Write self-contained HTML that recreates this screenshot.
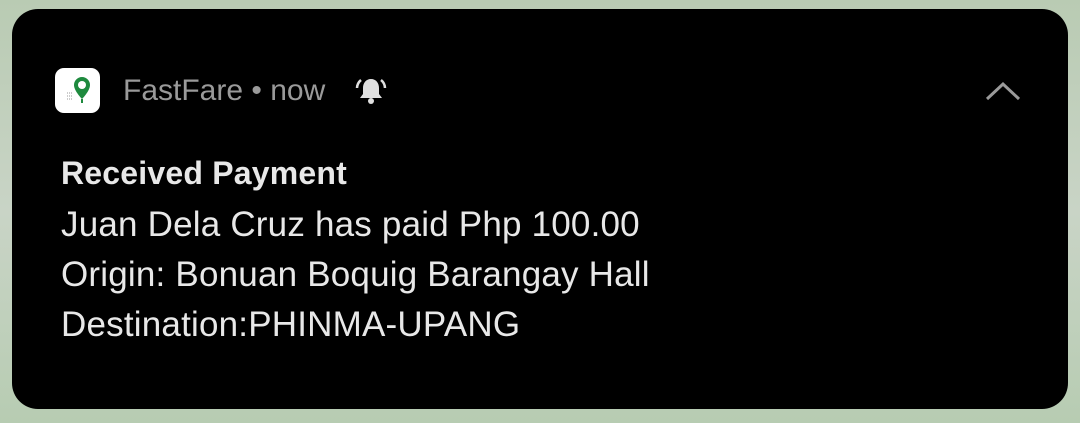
<!DOCTYPE html>
<html><head><style>
html,body{margin:0;padding:0;width:1080px;height:423px;overflow:hidden;background:linear-gradient(180deg,#b9cbb3 0%,#c9d4c6 50%,#b7ccb2 100%);font-family:"Liberation Sans",sans-serif;}
.card{position:absolute;left:12px;top:9px;width:1056px;height:400px;background:#000;border-radius:26px;}
.icon{position:absolute;left:55px;top:68px;width:45px;height:45px;background:#fff;border-radius:9px;}
.hdr{position:absolute;left:123px;top:74px;font-size:30px;color:#9a9a9a;white-space:nowrap;}
.t{position:absolute;left:61px;color:#e8e8e8;font-size:35px;white-space:nowrap;letter-spacing:0.2px;}
</style></head><body>
<div class="card"></div>
<div class="icon"><svg width="45" height="45" viewBox="0 0 45 45">
<path d="M27 9a8 8 0 0 0-8 8c0 6 8 14 8 14s8-8 8-14a8 8 0 0 0-8-8z" fill="#1e8a3e"/>
<circle cx="27" cy="17" r="4" fill="#fff"/><line x1="27" y1="31" x2="27" y2="35" stroke="#1e8a3e" stroke-width="2"/>
<path d="M12 25h6M12 28h6M12 31h5" stroke="#999" stroke-width="1" stroke-dasharray="1 1"/></svg></div>
<div class="hdr">FastFare • now</div>
<svg style="position:absolute;left:355px;top:76px" width="32" height="30" viewBox="0 0 32 30">
<path d="M16 3c-5 0-8 4-8 9v6l-3 4h22l-3-4v-6c0-5-3-9-8-9z" fill="#e0e0e0"/>
<circle cx="16" cy="25" r="3" fill="#e0e0e0"/>
<path d="M6 4a11 11 0 0 0-4 8M26 4a11 11 0 0 1 4 8" stroke="#e0e0e0" stroke-width="2.5" fill="none"/></svg>
<svg style="position:absolute;left:984px;top:80px" width="38" height="22" viewBox="0 0 38 22">
<path d="M3 19L19 4L35 19" stroke="#9a9a9a" stroke-width="3" fill="none"/></svg>
<div class="t" style="top:155px;font-weight:bold;font-size:32px">Received Payment</div>
<div class="t" style="top:205px">Juan Dela Cruz has paid Php 100.00</div>
<div class="t" style="top:255px">Origin: Bonuan Boquig Barangay Hall</div>
<div class="t" style="top:305px">Destination:PHINMA-UPANG</div>
</body></html>
